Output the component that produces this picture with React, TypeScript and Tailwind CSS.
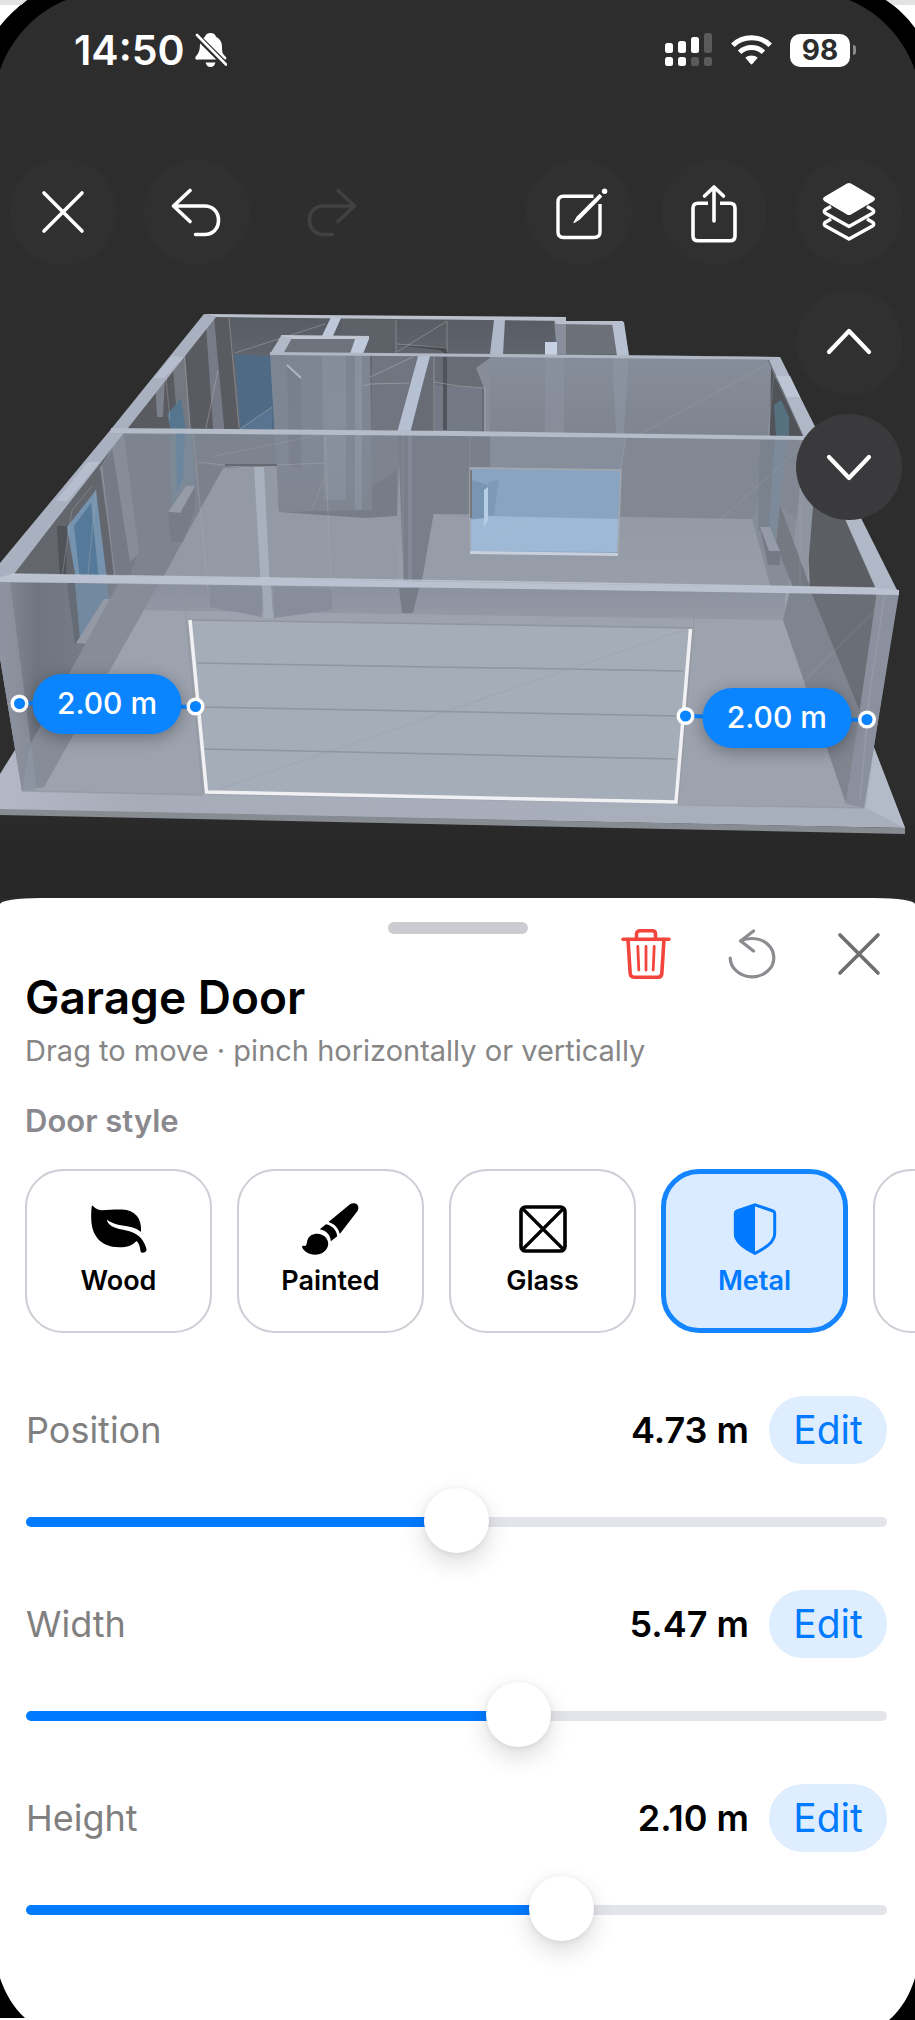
import React, { useState } from 'react';
import { clsx } from 'clsx';

interface IconProps {
  className?: string;
}

function BellOffIcon() {
  return (
    <svg width="32" height="36" viewBox="0 0 32 36" aria-label="Silent mode">
      <path
        d="M15.5 1C18.5 1 20.5 2.5 21 4.8C25 6.6 27 10 27 15C27 20 27.5 22 30.5 24.5C31.5 25.5 31.5 26 31 27.5H4C1 28 0 27.5 .4 25.5C.8 24 4.8 21 4.8 15C4.8 10 6.5 6.6 10 4.8C10.5 2.5 12.5 1 15.5 1ZM10.5 30.5H20.5C19.5 33.5 18 35 15.5 35S11.5 33.5 10.5 30.5Z"
        fill="white"
      />
      <path d="M-1 1L32 34" stroke="#2d2d2d" strokeWidth="6" />
      <path d="M2 3L31 32.5" stroke="white" strokeWidth="2.6" strokeLinecap="round" />
    </svg>
  );
}

function SignalIcon() {
  return (
    <svg width="48" height="34" viewBox="0 0 48 34" aria-label="Signal">
      <g fill="white">
        <rect x="0" y="10" width="8" height="10" rx="2.5" />
        <rect x="13" y="8" width="8" height="12" rx="2.5" />
        <rect x="26" y="4" width="8" height="16" rx="2.5" />
        <rect x="0" y="24" width="8" height="9" rx="2.5" />
        <rect x="13" y="24" width="8" height="9" rx="2.5" />
      </g>
      <g fill="#5a5a5a">
        <rect x="39" y="0" width="8" height="20" rx="2.5" />
        <rect x="26" y="24" width="8" height="9" rx="2.5" />
        <rect x="39" y="24" width="8" height="9" rx="2.5" />
      </g>
    </svg>
  );
}

function WifiIcon() {
  return (
    <svg width="41" height="30" viewBox="0 0 41 30" aria-label="Wi-Fi">
      <g fill="none" stroke="white" strokeWidth="5">
        <path d="M1.8 10.2C12 .2 29 .2 39.2 10.2" />
        <path d="M8.6 17.2C15.2 10.8 25.8 10.8 32.4 17.2" />
      </g>
      <path d="M14.3 22.8C18 19.8 23 19.8 26.7 22.8L21.3 29Q20.5 29.8 19.7 29Z" fill="white" />
    </svg>
  );
}

function CloseIcon({ className }: IconProps) {
  return (
    <svg width="52" height="52" viewBox="0 0 52 52" className={className}>
      <path d="M7 7L45 45M45 7L7 45" stroke="currentColor" strokeWidth="3.6" strokeLinecap="round" />
    </svg>
  );
}

function UndoIcon({ className }: IconProps) {
  return (
    <svg
      width="52"
      height="52"
      viewBox="0 0 52 52"
      fill="none"
      stroke="currentColor"
      strokeWidth="3.6"
      strokeLinecap="round"
      strokeLinejoin="round"
      className={className}
    >
      <path d="M19 4.5L2.5 20L19 35.5M2.5 20H33.5C42 20 47.5 26 47.5 34.3S42 48.5 33.5 48.5H24.5" />
    </svg>
  );
}

function ComposeIcon() {
  return (
    <svg width="52" height="52" viewBox="0 0 52 52" fill="none" className="overflow-visible">
      <path
        d="M40.5 10.2H10.500C7 10.200 5 12.200 5 16V46C5 49.500 7 51.500 10.500 51.500H41C45 51.500 47 49.500 47 46V18"
        stroke="white"
        strokeWidth="3.4"
      />
      <path d="M21 36.500L24 31.200L46.500 8.700L48.500 10.700L26.200 33.300Z" fill="white" stroke="white" strokeWidth="1.2" strokeLinejoin="round" />
      <circle cx="51.600" cy="5.300" r="2.700" fill="white" />
    </svg>
  );
}

function ShareIcon() {
  return (
    <svg
      width="52"
      height="52"
      viewBox="0 0 52 52"
      fill="none"
      stroke="white"
      strokeWidth="3.6"
      strokeLinecap="round"
      strokeLinejoin="round"
      className="overflow-visible"
    >
      <path d="M26 1V35M16.5 10L26 1L35.500 10" />
      <path
        d="M20 17.2H10C6.500 17.200 5 19 5 22V50C5 53 6.500 54.800 10 54.800H42C45.500 54.800 47 53 47 50V22C47 19 45.500 17.200 42 17.200H32"
        strokeLinecap="butt"
      />
    </svg>
  );
}

function LayersIcon() {
  return (
    <svg width="52" height="52" viewBox="0 0 52 52" fill="none" className="overflow-visible">
      <path
        d="M24 -2.4Q26 -3.6 28 -2.4L50.5 10.8Q53.5 13 50.5 15.2L28 28.4Q26 29.6 24 28.4L1.5 15.2Q-1.5 13 1.5 10.8Z"
        fill="white"
      />
      <g stroke="white" strokeWidth="3.4" strokeLinejoin="round">
        <path d="M8 20.5L2.5 23.6Q0 25.6 2.5 27.3L26 40.500L49.500 27.300Q52 25.600 49.500 23.600L44 20.500" />
        <path d="M8 33L2.5 36.2Q0 38.2 2.5 40L26 53L49.500 40Q52 38.200 49.500 36.200L44 33" />
      </g>
    </svg>
  );
}

function ChevronIcon({ className }: IconProps) {
  return (
    <svg width="52" height="52" viewBox="0 0 52 52" fill="none" className={className}>
      <path d="M6 36L26 15L46 36" stroke="white" strokeWidth="4.2" strokeLinecap="round" strokeLinejoin="round" />
    </svg>
  );
}

function TrashIcon() {
  return (
    <svg
      width="50"
      height="50"
      viewBox="0 0 50 50"
      fill="none"
      stroke="#f4453d"
      strokeWidth="3.6"
      strokeLinecap="round"
      strokeLinejoin="round"
    >
      <path d="M2 10.2H48M15.5 10V5C15.5 2.8 17 1.8 19 1.8H31C33 1.8 34.5 2.8 34.5 5V10" />
      <path d="M7 10.5L9.2 44.5C9.4 47 10.6 48.2 13 48.2H37C39.4 48.2 40.6 47 40.8 44.5L43 10.5" />
      <path d="M16.8 17.5L17.8 41M25 17.5V41M33.2 17.5L32.2 41" strokeWidth="2.8" />
    </svg>
  );
}

function ResetIcon() {
  return (
    <svg
      width="50"
      height="50"
      viewBox="0 0 50 50"
      fill="none"
      stroke="#8c8c90"
      strokeWidth="3.2"
      strokeLinecap="round"
      strokeLinejoin="round"
    >
      <path d="M3.2 29C3.2 39 13 47.8 25 47.8S46.8 39.500 46.800 29C46.800 17.500 37 9.500 25 9.500C21 9.500 17 10.300 13.700 12" />
      <path d="M26.5 2L13.7 12L26.5 22" />
    </svg>
  );
}

function LeafIcon() {
  return (
    <svg width="60" height="52" viewBox="0 0 60 52" fill="currentColor">
      <path d="M3.5 2.5C5 4 8 7.2 13 7.2C18 7.2 26 6.3 33 6.5C46 7 53 15 52 29C50 27 45 24.5 38 23.3C30 22 22 20.5 18 16.5C18 22 26 25.5 33 26.5C42 28 50 31 54 38C56 41.5 57.5 45 57.5 47C57 50 52 51 51.5 48C51 44 50 40 47.5 38C43 43 37 44.5 30 44.3C12 44 2 33 2.2 14C2.2 9 2.4 2 3.5 2.5Z" />
    </svg>
  );
}

function BrushIcon() {
  return (
    <svg width="60" height="52" viewBox="0 0 60 52" fill="currentColor">
      <path d="M27.5 19C33 20.5 37.5 25 38.8 31L56.5 8C58.5 5 57 1.5 54.5 .6C52.5 0 50.5 .2 49 1.2Z" />
      <path d="M25 21.3C31 22.5 35.5 27 36.3 33.2L29.8 38.3C29.6 32 25.5 27.5 18.8 26.2Z" />
      <path d="M16 30.8C23 30.8 27.6 36 27.2 41.5C26.5 48 20.5 51.7 14 51.7C8 51.7 3 48.5 1.2 44.6C.8 43 2 42.5 3.4 43C6 43.3 5.5 40 6.5 37C8 33 11.5 30.8 16 30.8Z" />
    </svg>
  );
}

function GlassIcon() {
  return (
    <svg width="60" height="52" viewBox="0 0 60 52" fill="none" stroke="currentColor">
      <rect x="8" y="4" width="44" height="44" rx="4.5" strokeWidth="3.6" />
      <path d="M9 5L51 47M51 5L9 47" strokeWidth="3.2" />
    </svg>
  );
}

function ShieldIcon() {
  return (
    <svg width="60" height="52" viewBox="0 0 60 52" className="overflow-visible">
      <path
        d="M30 1.8L48 8Q49.7 8.7 49.7 10.5V31C49.7 40 38 46.5 30 50.3C22 46.5 10.3 40 10.3 31V10.5Q10.3 8.7 12 8Z"
        fill="none"
        stroke="currentColor"
        strokeWidth="3"
      />
      <path d="M30 .8L11 8V32C11 40 22 46.5 30 50.3Z" fill="currentColor" />
    </svg>
  );
}

// Translucent floor model, painted back to front
function HouseModel() {
  return (
    <svg viewBox="0 265 915 633" className="block w-full h-auto" role="img" aria-label="3D floor plan">
      <defs>
        <linearGradient id="ground" x1="0" y1="0" x2="0" y2="1">
          <stop offset="0" stopColor="#2d2d2d" />
          <stop offset=".84" stopColor="#2d2d2d" />
          <stop offset=".92" stopColor="#272727" />
          <stop offset="1" stopColor="#272727" />
        </linearGradient>
        <linearGradient id="farWall" x1="0" y1="0" x2="0" y2="1">
          <stop offset="0" stopColor="#575b62" />
          <stop offset="1" stopColor="#737883" />
        </linearGradient>
        <linearGradient id="midWall" x1="0" y1="0" x2="0" y2="1">
          <stop offset="0" stopColor="#868d9a" />
          <stop offset="1" stopColor="#7f858f" />
        </linearGradient>
        <linearGradient id="floor" x1="0" y1="0" x2="0" y2="1">
          <stop offset="0" stopColor="#8e949f" />
          <stop offset="1" stopColor="#989eaa" />
        </linearGradient>
        <linearGradient id="closet" x1="0" y1="0" x2="0" y2="1">
          <stop offset="0" stopColor="#838c9b" />
          <stop offset="1" stopColor="#818793" />
        </linearGradient>
        <linearGradient id="leftWall" x1="0" y1="0" x2="1" y2="0">
          <stop offset="0" stopColor="#878d98" />
          <stop offset=".3" stopColor="#6f757f" />
          <stop offset="1" stopColor="#7b818c" />
        </linearGradient>
        <linearGradient id="backBand" x1="0" y1="0" x2="0" y2="1">
          <stop offset="0" stopColor="#8b919e" />
          <stop offset="1" stopColor="#939aa6" />
        </linearGradient>
        <linearGradient id="slab" x1="0" y1="0" x2="1" y2="0">
          <stop offset="0" stopColor="#b2b8c5" />
          <stop offset=".15" stopColor="#a6acb8" />
          <stop offset="1" stopColor="#a9b0bd" />
        </linearGradient>
      </defs>
      <rect y="265" width="915" height="633" fill="url(#ground)" />

      {/* slab */}
      <path d="M0 774L18 745L872 742L905 828L0 810Z" fill="url(#slab)" />
      <path d="M0 809L905 828V834L0 815Z" fill="#878b92" />
      <path d="M874 748L905 828L866 808Z" fill="#b3bac8" />

      {/* far rooms */}
      <path d="M204 314L566 319V322H623L629 355L780 357L815 427L804 440L111 430Z" fill="url(#farWall)" />
      <path d="M213 318L229 318L240 430L126 430Z" fill="#595b60" />
      <path d="M206 326L214 317L228 470H216Z" fill="#767b87" />
      <path d="M235 355L271 356L275 430L240 429Z" fill="#4e6a84" />
      <path d="M240 429L272 407V430Z" fill="#587490" />
      <path d="M172 356L184 340L191 430L178 430Z" fill="#80858f" opacity=".7" />
      <path d="M155 378L165 378L163 417H157Z" fill="#8a909c" opacity=".7" />
      <path d="M167 415L181 398L186 430H171Z" fill="#56758f" />
      <path d="M342 319L396 320V353H342Z" fill="#5d6168" />
      <path d="M397 345L447 347V355L440 350L397 345Z" fill="#45484d" />
      <path d="M372 356L417 357L398 432H372Z" fill="#707580" />
      <path d="M429 357H490V433H411Z" fill="#676c75" />
      <path d="M435 385L482 388V433H435Z" fill="#747a85" />
      <path d="M443 357H447V430H443Z" fill="#4f535a" />
      <path d="M476 368L490 358V433H484V388Z" fill="#868c98" />
      <path d="M490 356L768 360L803 438L490 434Z" fill="url(#midWall)" />
      <path d="M545 355H564V433H545Z" fill="#8d94a2" opacity=".5" />
      <path d="M612 355H629L624 433H616Z" fill="#8d94a2" opacity=".7" />
      <path d="M771 368L803 437H770Z" fill="#505358" />
      <path d="M774 405L781 400L789 417V437H776Z" fill="#56707f" />
      <path d="M566 324L612 324L617 354H566Z" fill="#6b7079" />
      <path d="M554 319L566 320V354H557Z" fill="#888e9b" />

      {/* middle room */}
      <path d="M111 432L804 440L898 592H0V578Z" fill="url(#floor)" />
      <path d="M124 434L325 436L279 512L223 468L160 592H20Z" fill="#7e848f" />
      <path d="M193 434L400 435L397 516L365 518L278 512L277 466L197 462Z" fill="#7d838f" />
      <path d="M223 468L277 466L279 512L365 513L398 516V592H155Z" fill="#939aa6" />
      <path d="M223 468L200 508L198 464Z" fill="#7b818c" />
      <path d="M278 490L365 492L397 470V516L365 518L279 512Z" fill="#777d88" />
      <path d="M420 435L804 440L846 521L752 519L433 514L418 592H404L400 435Z" fill="#828893" />
      <path d="M433 514L470 518V592H418Z" fill="#969ca8" />
      <path d="M398 434H432L436 500L420 592H404Z" fill="#787e8a" />
      <path d="M432 436H490V514H432Z" fill="#7a808b" />
      <path d="M408 434H412V592H408Z" fill="#868d9a" opacity=".7" />
      <path d="M490 436L626 438L621 470H490Z" fill="#8b92a0" opacity=".6" />
      <path d="M752 519L764 490L812 535L805 592H772Z" fill="#878d98" />
      <path d="M760 437L780 438L771 530H758Z" fill="#7a828d" />
      <path d="M775 437H787L776 540H768Z" fill="#7c8a99" />
      <path d="M804 440L862 521L846 521L877 592H810Z" fill="#5b5e62" />
      <path d="M801 480L813 507L806 592H788Z" fill="#8e95a0" />
      <path d="M780 505L812 592H795L776 545Z" fill="#747982" />
      <path d="M760 527H770L780 550V565H768Z" fill="#747a85" />
      <path d="M760 527H770L780 551H769Z" fill="#959ba8" />

      {/* left wall */}
      <path d="M120 435L12 577H115L100 468Z" fill="#63666c" />
      <path d="M102 465L123 433L138 550L126 590H115Z" fill="#757a86" />
      <path d="M110 434H124L139 553L130 562Z" fill="#868c98" />
      <path d="M169 434L192 434L196 485L172 505Z" fill="#7c8997" />
      <path d="M176 432H185L183 478L177 492Z" fill="#6c86a0" />
      <path d="M168 512L186 486H195L180 513Z" fill="#959ba7" />
      <path d="M168 512L181 513L195 487V510L183 542H171Z" fill="#777d87" />
      <path d="M57 526H67L66 580L60 580Z" fill="#50535a" />
      <path d="M67 527L96 490L107 580H76Z" fill="#7593ae" />
      <path d="M74 526L91 503L99 580H80Z" fill="#557a99" />
      <path d="M279 354L370 354L372 510L279 512L270 354Z" fill="url(#closet)" opacity=".82" />
      <path d="M322 356H346V500H324Z" fill="#98a2b1" opacity=".3" />
      <path d="M287 365L301 378V470L289 465Z" fill="#737984" opacity=".4" />
      <path d="M355 356H362V510H355Z" fill="#a3abb8" opacity=".3" />
      <path d="M284 339H357L351 353H284Z" fill="#6d727b" />

      {/* large window */}
      <path d="M470 467L621 470L617 555L470 552Z" fill="#88a4c0" />
      <path d="M488 516L619 519L617 552L471 551V520Z" fill="#9eb9d6" />
      <path d="M472 480L488 485V518L472 519Z" fill="#7896b2" />
      <path d="M484 490L488 487V520L484 527Z" fill="#b5cde5" />
      <path d="M488 483L499 479L494 516H488Z" fill="#7c9ab7" />
      <path d="M470 551L618 553V556L470 554Z" fill="#c9d0dd" />
      <path d="M470 552V468L621 470L618 554" fill="none" stroke="#a5a7ac" strokeWidth="1.5" />
      <path d="M471 470V518" stroke="#77787b" strokeWidth="2" />

      <path d="M254 467H264L270 590H261Z" fill="#a9b0be" />

      {/* front room seen through the front wall */}
      <path d="M0 582L898 594L864 808L22 791L0 658Z" fill="#9ca2ae" />
      <path d="M130 584L786 592L784 620L125 610Z" fill="url(#backBand)" />
      <path d="M210 586L262 587V617L210 607ZM274 587L332 589V610L274 618Z" fill="#878d9a" />
      <path d="M399 588L419 588L413 613H402Z" fill="#767c88" />
      <path d="M262 585H271L273 618H264Z" fill="#a3aab7" />
      <path d="M0 582L120 584L62 690L22 791L0 658Z" fill="url(#leftWall)" />
      <path d="M67 583L75 583L80 638L75 645Z" fill="#666c75" />
      <path d="M75 583L107 584L109 600L80 638Z" fill="#7389a0" />
      <path d="M104 599H117L91 644L76 643Z" fill="#9399a5" />
      <path d="M118 584L158 585L44 787L22 791L30 745Z" fill="#868c98" />
      <path d="M0 582L10 582L37 791H22L0 658Z" fill="#9299a6" opacity=".6" />
      <path d="M791 586L811 588L860 712L846 804L783 620Z" fill="#7f858f" />
      <path d="M809 587L877 593L860 712Z" fill="#6a6f77" />
      <path d="M877 592L899 593L864 808L846 804Z" fill="#8a909d" />
      <path d="M885 594L870 690L860 800" fill="none" stroke="#9fa6b3" strokeWidth="1.5" opacity=".5" />

      {/* garage door */}
      <path d="M189 620L692 628L676 803L206 793Z" fill="#a5adb9" />
      <g fill="none" stroke="#92959b" strokeWidth="1.5">
        <path d="M189 620L692 628M197 663L683 671M201 707L679 716M204 749L676 759" />
        <path d="M183 585L203 794M697 588L678 805M22 791L203 795M678 805L864 808" opacity=".6" />
        <path d="M220 789L683 630" opacity=".2" />
      </g>
      <path d="M190 620L206.5 792L676 802L690.5 629" fill="none" stroke="#f1f1f3" strokeWidth="3.5" />

      {/* hairlines left by the mesh */}
      <g fill="none" stroke="#b4b3b4" strokeWidth="1">
        <path d="M229 318L239 428M218 370L206 428M235 353L325 324M396 320V353M397 352L447 321V352M397 344L447 348" opacity=".45" />
        <path d="M240 429L272 407M370 377L413 357M363 386L370 384L409 383M434 356V432M434 382L458 386L485 388V432" opacity=".5" />
        <path d="M193 433L208 590M325 434L331 590M197 462L250 468M277 465L325 463" opacity=".35" />
        <path d="M184 352L190 428M166 378L170 420M102 468L115 577M62 577L72 510L92 486M88 575L96 490" opacity=".35" />
        <path d="M215 456L325 434M311 511L326 474M640 434L768 364M720 520L798 450M470 550L535 518M800 437V592M774 375L768 437" opacity=".25" />
        <path d="M403 434V580M470 434V467M626 436L621 470M800 685L876 610" opacity=".25" />
      </g>
      <path d="M225 465H277" fill="none" stroke="#666971" strokeWidth="2" />
      <path d="M287 365L301 378" stroke="#a8b6c6" strokeWidth="2" />

      {/* wall tops */}
      <path d="M204 314L216 317L128 428L123 434L12 576L0 582V563L112 428Z" fill="#a9b0bf" />
      <path d="M172 356L184 357L164 378H154ZM88 462L100 462L67 501H56Z" fill="#c0c7d7" opacity=".6" />
      <path d="M204 314L566 317V321L216 317Z" fill="#bbc1cd" />
      <path d="M554 318H566V321L623 321V325L556 324Z" fill="#b7bdc9" />
      <path d="M331 317L341 318L333 336H322Z" fill="#bec8da" />
      <path d="M494 320H505L503 354H490Z" fill="#b0b9ca" />
      <path d="M612 323L624 322L629 356H617Z" fill="#b6c0d1" />
      <path d="M545 342H557V355H545Z" fill="#c6d1e3" />
      <path d="M281 335L369 336V339H282Z" fill="#c0c6d2" />
      <path d="M281 336L292 338L283 354H270Z" fill="#b1b9c8" />
      <path d="M355 339H369L363 354H350Z" fill="#c0cadd" />
      <path d="M270 352L500 354L780 357L779 360L490 357L270 355Z" fill="#b0b7c4" />
      <path d="M418 356L430 356L410 433H397Z" fill="#b6c0d3" />
      <path d="M769 360L780 357L862 520L898 592L877 590L846 521L804 437Z" fill="#b0b7c6" />
      <path d="M776 376H790L800 397H787Z" fill="#bdc5d5" />
      <path d="M111 428L458 431L804 436V440L458 436L111 433Z" fill="#b4bbc9" />
      <path d="M0 577L12 574L458 582L877 588L899 590V595L458 588L0 582Z" fill="#bac2d1" />
      <path d="M12 574L458 581L877 588" fill="none" stroke="#cbd1dc" strokeWidth="1.5" opacity=".7" />

      {/* dimension line */}
      <g stroke="#0a84ff" strokeWidth="4">
        <path d="M20 703L195 707M685 716L867 720" />
      </g>
      <g fill="#0a84ff" stroke="white" strokeWidth="3.5">
        <circle cx="19.5" cy="703.5" r="7.3" />
        <circle cx="195.5" cy="706.5" r="7.3" />
        <circle cx="685.5" cy="716" r="7.3" />
        <circle cx="867" cy="719.5" r="7.3" />
      </g>
    </svg>
  );
}

interface RoundButtonProps {
  label: string;
  disabled?: boolean;
  raised?: boolean;
  children: React.ReactNode;
}

function RoundButton({ label, disabled, raised, children }: RoundButtonProps) {
  return (
    <button
      type="button"
      aria-label={label}
      disabled={disabled}
      className={clsx(
        'flex size-[106px] shrink-0 items-center justify-center rounded-full',
        disabled ? 'bg-[#2e2e2e] text-[#414141]' : 'text-white',
        !disabled && (raised ? 'bg-[#3a3a3c]' : 'bg-[#303030]')
      )}
    >
      {children}
    </button>
  );
}

function StatusBar() {
  return (
    <div className="flex h-[100px] items-center justify-between pl-[74px] pr-[59px]">
      <div className="flex items-center gap-[10px]">
        <span className="text-[41px] font-semibold leading-none text-white">14:50</span>
        <BellOffIcon />
      </div>
      <div className="flex items-center gap-[18px]">
        <SignalIcon />
        <WifiIcon />
        <div className="flex items-center gap-[3px]">
          <span className="flex h-[33px] w-[60px] items-center justify-center rounded-[10px] bg-white text-[28px] font-bold leading-none text-[#2d2d2d]">
            98
          </span>
          <span className="h-[10px] w-[3px] rounded-r-full bg-[#8a8a8a]" />
        </div>
      </div>
    </div>
  );
}

function Toolbar() {
  return (
    <nav className="flex justify-between pl-[10px] pr-[13px] pt-[59px]">
      <div className="flex gap-7">
        <RoundButton label="Close">
          <CloseIcon />
        </RoundButton>
        <RoundButton label="Undo">
          <UndoIcon />
        </RoundButton>
        <RoundButton label="Redo" disabled>
          <UndoIcon className="-scale-x-100" />
        </RoundButton>
      </div>
      <div className="flex gap-[29px]">
        <RoundButton label="Edit">
          <ComposeIcon />
        </RoundButton>
        <RoundButton label="Share">
          <ShareIcon />
        </RoundButton>
        <RoundButton label="Layers">
          <LayersIcon />
        </RoundButton>
      </div>
    </nav>
  );
}

const pill =
  'absolute flex h-[60px] w-[149px] -translate-x-1/2 -translate-y-1/2 items-center justify-center rounded-full bg-[#0a84ff] text-[30px] font-medium text-white shadow-[0_4px_16px_rgba(0,0,0,0.3)]';

function Viewport() {
  return (
    <section className="relative">
      <HouseModel />
      <span className={clsx(pill, 'left-[11.7%] top-[69.3%]')}>2.00 m</span>
      <span className={clsx(pill, 'left-[84.9%] top-[71.5%]')}>2.00 m</span>
      <div className="absolute right-[13px] top-6 flex flex-col gap-[19px]">
        <RoundButton label="Floor up">
          <ChevronIcon />
        </RoundButton>
        <RoundButton label="Floor down" raised>
          <ChevronIcon className="rotate-180" />
        </RoundButton>
      </div>
    </section>
  );
}

const styles = [
  { name: 'Wood', icon: <LeafIcon /> },
  { name: 'Painted', icon: <BrushIcon /> },
  { name: 'Glass', icon: <GlassIcon /> },
  { name: 'Metal', icon: <ShieldIcon /> },
  { name: '', icon: null },
];

function StylePicker() {
  const [selected, setSelected] = useState('Metal');

  return (
    <div className="mt-7 flex gap-[25px] overflow-hidden pl-[25px]">
      {styles.map((style) => (
        <button
          key={style.name}
          type="button"
          aria-label={style.name || 'More styles'}
          aria-pressed={selected === style.name}
          onClick={() => setSelected(style.name)}
          className={clsx(
            'flex h-[164px] w-[187px] shrink-0 flex-col items-center justify-center gap-2 rounded-[38px] text-[27px] font-semibold leading-9',
            selected === style.name
              ? 'border-[5px] border-[#1485ff] bg-[#dbebff] text-[#007aff]'
              : 'border-2 border-[#cdced6] bg-white text-black'
          )}
        >
          {style.icon}
          {style.name}
        </button>
      ))}
    </div>
  );
}

interface MeasureSliderProps {
  label: string;
  initial: number;
  max: number;
}

function MeasureSlider({ label, initial, max }: MeasureSliderProps) {
  const [value, setValue] = useState(initial);
  const id = label.toLowerCase();
  const percent = (value / max) * 100;

  return (
    <div>
      <div className="flex h-[68px] items-center">
        <label htmlFor={id} className="flex-1 text-[36px] text-[#808080]">
          {label}
        </label>
        <output htmlFor={id} className="mr-5 text-[36px] font-semibold text-black">
          {value.toFixed(2)} m
        </output>
        <button
          type="button"
          aria-label={`Edit ${label}`}
          className="h-[68px] w-[118px] rounded-full bg-[#dfeeff] text-[39px] text-[#007aff]"
        >
          Edit
        </button>
      </div>
      <input
        id={id}
        type="range"
        min={0}
        max={max}
        step={0.01}
        value={value}
        onChange={(e) => setValue(Number(e.target.value))}
        style={{ backgroundImage: `linear-gradient(to right, #007aff ${percent}%, #e4e4eb ${percent}%)` }}
        className="mt-[53px] block h-[10px] w-full appearance-none rounded-full [&::-webkit-slider-thumb]:-mt-1 [&::-webkit-slider-thumb]:size-[65px] [&::-webkit-slider-thumb]:appearance-none [&::-webkit-slider-thumb]:rounded-full [&::-webkit-slider-thumb]:bg-white [&::-webkit-slider-thumb]:shadow-[0_10px_24px_rgba(0,0,0,0.14),0_1px_6px_rgba(0,0,0,0.08)]"
      />
    </div>
  );
}

function DoorSheet() {
  return (
    <section className="relative flex-1 rounded-t-[40px_6px] bg-white pb-[103px]">
      <span className="absolute left-1/2 top-6 h-3 w-[140px] -translate-x-1/2 rounded-full bg-[#cbcbd2]" />
      <div className="flex items-start justify-between pl-[25px] pr-[30px]">
        <h1 className="pt-[75px] text-[46px] font-semibold leading-[48px] text-black">Garage Door</h1>
        <div className="flex gap-14 pt-[30px] text-[#6e6e6e]">
          <button type="button" aria-label="Delete">
            <TrashIcon />
          </button>
          <button type="button" aria-label="Reset">
            <ResetIcon />
          </button>
          <button type="button" aria-label="Close panel">
            <CloseIcon />
          </button>
        </div>
      </div>
      <p className="mt-3 pl-[25px] text-[29px] leading-9 text-[#868686]">
        Drag to move · pinch horizontally or vertically
      </p>
      <h2 className="mt-8 pl-[25px] text-[31px] font-semibold leading-10 text-[#8a8a8e]">Door style</h2>
      <StylePicker />
      <div className="mt-[63px] flex flex-col gap-[63px] pl-[26px] pr-[28px]">
        <MeasureSlider label="Position" initial={4.73} max={9.47} />
        <MeasureSlider label="Width" initial={5.47} max={9.47} />
        <MeasureSlider label="Height" initial={2.1} max={3.32} />
      </div>
    </section>
  );
}

// Bezel visible around the rounded display
function Bezel() {
  return (
    <div className="pointer-events-none absolute inset-0 flex flex-col justify-between overflow-hidden">
      <div className="flex justify-between">
        <svg width="68" height="72" viewBox="0 0 68 72">
          <path d="M0 0H66C38 11 12 36 0 70Z" fill="black" />
          <path d="M0 0H27C16 8 7 17 0 26Z" fill="white" />
          <path d="M0 0H27L21 5H0Z" fill="#e2e2e2" />
        </svg>
        <svg width="68" height="72" viewBox="0 0 68 72" className="-scale-x-100">
          <path d="M0 0H66C38 11 12 36 0 70Z" fill="black" />
          <path d="M0 0H29C17 8 8 17 0 28Z" fill="white" />
          <path d="M0 0H29L22 5H0Z" fill="#e2e2e2" />
        </svg>
      </div>
      <div className="flex justify-between">
        <svg width="26" height="40" viewBox="0 0 26 40">
          <path d="M0 0C5 15 13 29 25 40H0Z" fill="black" />
        </svg>
        <svg width="26" height="42" viewBox="0 0 26 42" className="-scale-x-100">
          <path d="M0 0C5 16 13 31 26 42H0Z" fill="black" />
        </svg>
      </div>
    </div>
  );
}

export default function App() {
  return (
    <main className="relative flex min-h-screen flex-col overflow-hidden bg-[#2d2d2d] font-['Inter','Liberation_Sans',sans-serif]">
      <StatusBar />
      <Toolbar />
      <Viewport />
      <DoorSheet />
      <Bezel />
    </main>
  );
}
